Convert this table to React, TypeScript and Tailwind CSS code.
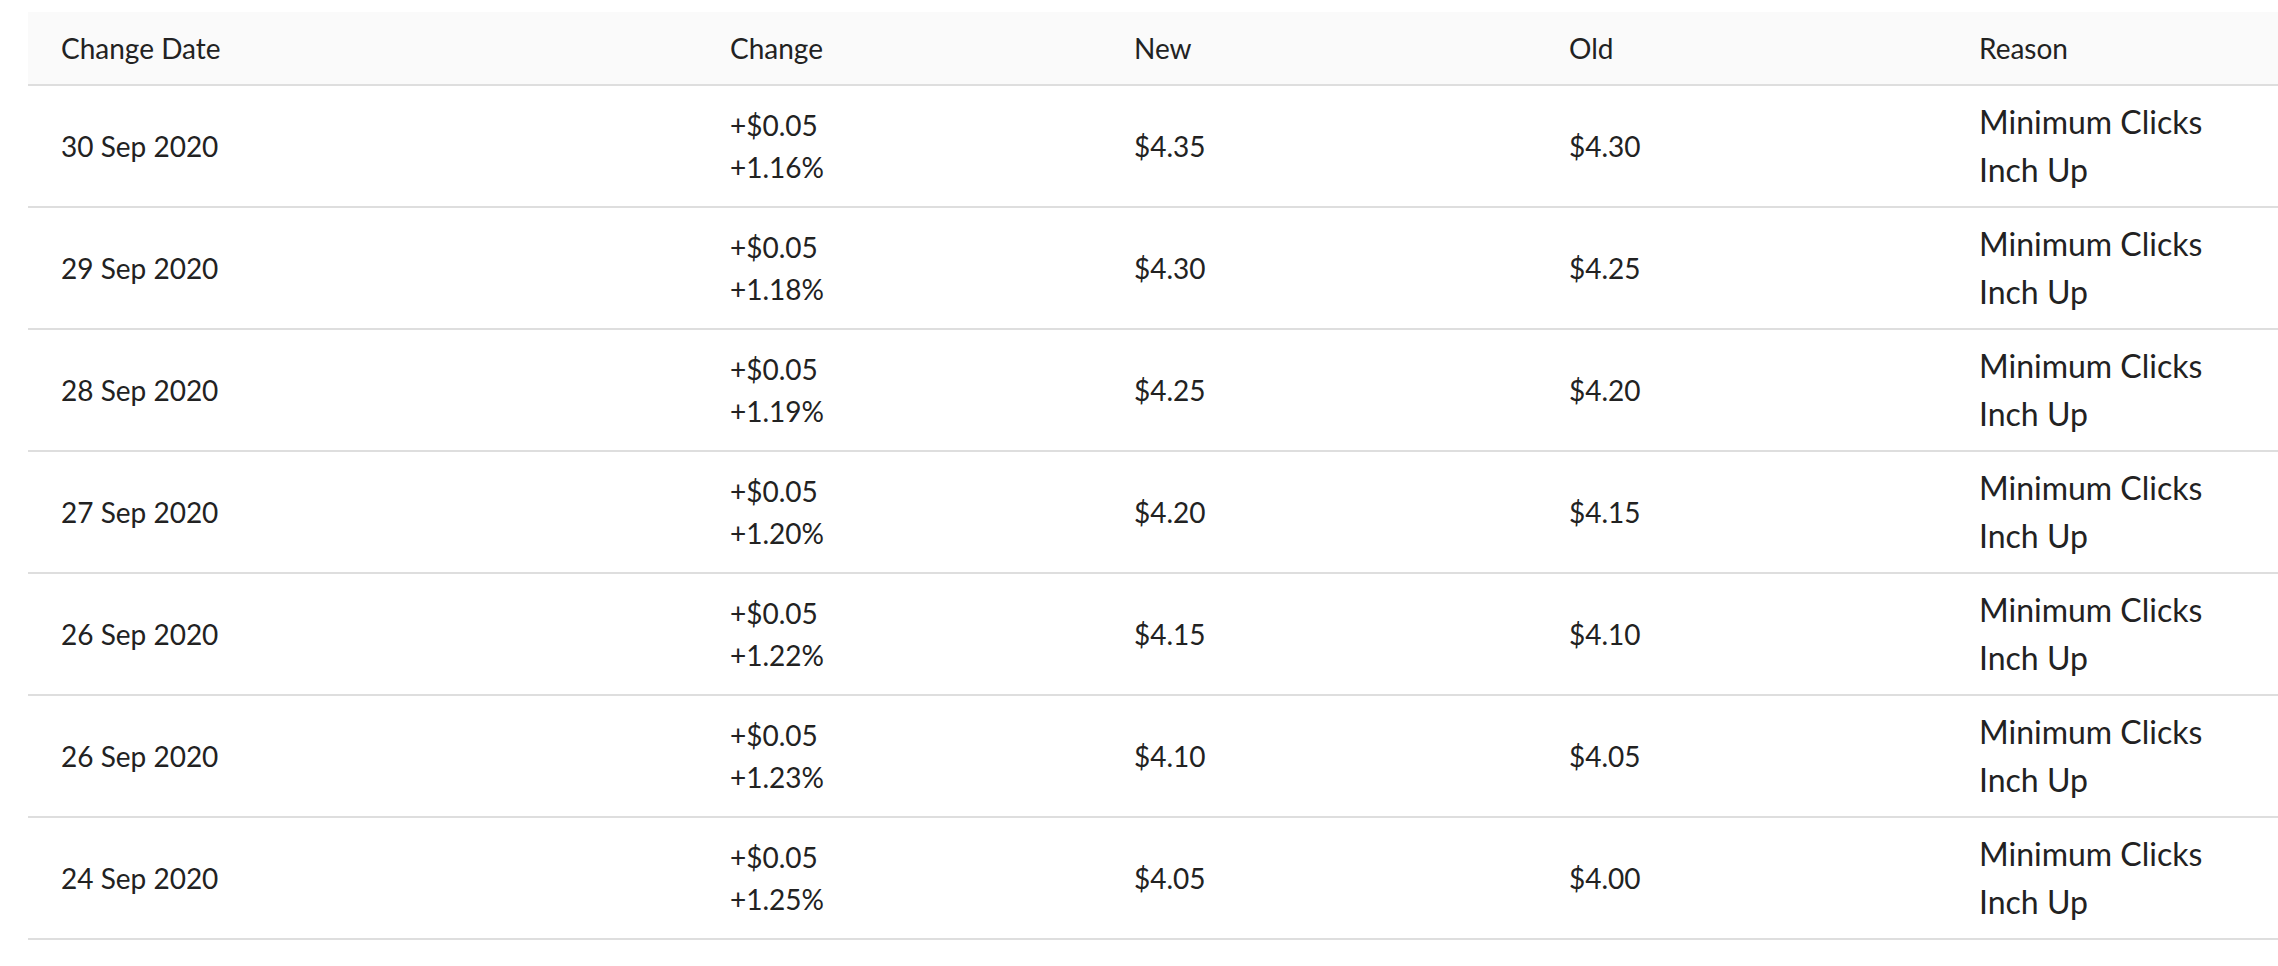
import React from 'react';

type Row = {
  date: string;
  amount: string;
  percent: string;
  newBid: string;
  oldBid: string;
  reason: string[];
};

const ROWS: Row[] = [
  { date: '30 Sep 2020', amount: '+$0.05', percent: '+1.16%', newBid: '$4.35', oldBid: '$4.30', reason: ['Minimum Clicks', 'Inch Up'] },
  { date: '29 Sep 2020', amount: '+$0.05', percent: '+1.18%', newBid: '$4.30', oldBid: '$4.25', reason: ['Minimum Clicks', 'Inch Up'] },
  { date: '28 Sep 2020', amount: '+$0.05', percent: '+1.19%', newBid: '$4.25', oldBid: '$4.20', reason: ['Minimum Clicks', 'Inch Up'] },
  { date: '27 Sep 2020', amount: '+$0.05', percent: '+1.20%', newBid: '$4.20', oldBid: '$4.15', reason: ['Minimum Clicks', 'Inch Up'] },
  { date: '26 Sep 2020', amount: '+$0.05', percent: '+1.22%', newBid: '$4.15', oldBid: '$4.10', reason: ['Minimum Clicks', 'Inch Up'] },
  { date: '26 Sep 2020', amount: '+$0.05', percent: '+1.23%', newBid: '$4.10', oldBid: '$4.05', reason: ['Minimum Clicks', 'Inch Up'] },
  { date: '24 Sep 2020', amount: '+$0.05', percent: '+1.25%', newBid: '$4.05', oldBid: '$4.00', reason: ['Minimum Clicks', 'Inch Up'] },
];

function App() {
  return (
    <div
      className="w-full min-h-screen bg-white overflow-hidden pt-3 pl-7 text-[#222]"
      style={{ fontFamily: 'Lato, "Open Sans", sans-serif' }}
    >
      <table className="table-fixed border-collapse w-[2250px] text-[28px] leading-[1.5]">
        <colgroup>
          <col className="w-[670px]" />
          <col className="w-[404px]" />
          <col className="w-[435px]" />
          <col className="w-[410px]" />
          <col className="w-[331px]" />
        </colgroup>
        <thead>
          <tr className="bg-[#fafafa] border-b-2 border-[#dedede] text-left">
            <th className="font-normal pl-[33px] h-[73px] align-middle">Change Date</th>
            <th className="font-normal pl-[32px] align-middle">Change</th>
            <th className="font-normal pl-[32px] align-middle">New</th>
            <th className="font-normal pl-[32px] align-middle">Old</th>
            <th className="font-normal pl-[32px] align-middle">Reason</th>
          </tr>
        </thead>
        <tbody>
          {ROWS.map((row, i) => (
            <tr key={i} className="border-b-2 border-[#dedede]">
              <td className="pl-[33px] h-[122px] align-middle">{row.date}</td>
              <td className="pl-[32px] align-middle">
                <div>{row.amount}</div>
                <div>{row.percent}</div>
              </td>
              <td className="pl-[32px] align-middle">{row.newBid}</td>
              <td className="pl-[32px] align-middle">{row.oldBid}</td>
              <td className="pl-[32px] align-middle text-[32px] leading-[1.5]">
                {row.reason.map((r) => (
                  <div key={r}>{r}</div>
                ))}
              </td>
            </tr>
          ))}
        </tbody>
      </table>
    </div>
  );
}

export default App;
